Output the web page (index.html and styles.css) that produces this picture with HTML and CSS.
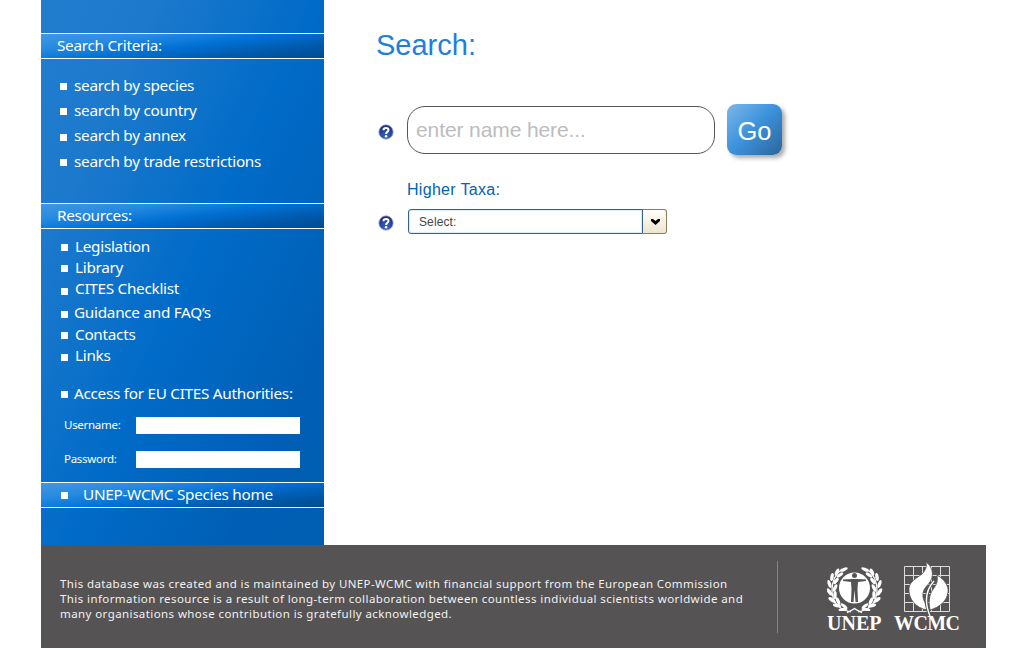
FILE: index.html
```html
<!DOCTYPE html>
<html lang="en">
<head>
<meta charset="utf-8">
<title>Species Search</title>
<link rel="stylesheet" href="styles.css">
</head>
<body>
<div class="page">
  <div class="columns">
    <aside class="sidebar">
      <h2 class="bar">Search Criteria:</h2>
      <ul class="criteria">
        <li><span>search by species</span></li>
        <li><span>search by country</span></li>
        <li class="drop"><span>search by annex</span></li>
        <li><span>search by trade restrictions</span></li>
      </ul>
      <h2 class="bar">Resources:</h2>
      <ul class="resources">
        <li class="h21"><span>Legislation</span></li>
        <li class="h21"><span>Library</span></li>
        <li class="h24"><span class="raised">CITES Checklist</span></li>
        <li class="h22 near"><span>Guidance and FAQ’s</span></li>
        <li class="h21"><span>Contacts</span></li>
        <li class="h22"><span>Links</span></li>
      </ul>
      <p class="access"><span>Access for EU CITES Authorities:</span></p>
      <form class="login">
        <label for="user">Username:</label><input id="user" type="text">
        <label for="pass">Password:</label><input id="pass" type="password">
      </form>
      <div class="bar home"><span>UNEP-WCMC Species home</span></div>
    </aside>
    <main class="main">
      <h1>Search:</h1>
      <div class="query">
        <svg class="help" viewBox="0 0 16 16"><use href="#help"/></svg>
        <input class="name" type="text" placeholder="enter name here...">
        <button class="go" type="button">Go</button>
      </div>
      <div class="taxa-label">Higher Taxa:</div>
      <div class="taxa">
        <svg class="help" viewBox="0 0 16 16"><use href="#help"/></svg>
        <div class="select"><span class="value">Select:</span><span class="arrow"><svg viewBox="0 0 9 6"><path d="M0 0h2l2.500 2L7 0h2v2L4.500 6 0 2z"/></svg></span></div>
      </div>
    </main>
  </div>
  <footer class="footer">
    <p class="credit"><span class="line-a">This database was created and is maintained by UNEP-WCMC with financial support from the European Commission</span><span>This information resource is a result of long-term collaboration between countless individual scientists worldwide and</span><span>many organisations whose contribution is gratefully acknowledged.</span></p>
    <div class="logos">
      <div class="logo unep">
        <svg viewBox="0 0 56 48">
          <g id="laurel" fill="#fff">
            <path d="M24 46Q5 42 5 24 5 11 15 3" fill="none" stroke="#fff" stroke-width="1.200"/>
            <ellipse cx="17" cy="3.500" rx="4" ry="1.600" transform="rotate(-25 17 3.500)"/>
            <ellipse cx="10" cy="6" rx="3.800" ry="1.700" transform="rotate(-65 10 6)"/>
            <ellipse cx="13" cy="9" rx="3.800" ry="1.600" transform="rotate(-35 13 9)"/>
            <ellipse cx="5" cy="11" rx="4" ry="1.700" transform="rotate(-80 5 11)"/>
            <ellipse cx="9" cy="15" rx="3.800" ry="1.700" transform="rotate(-52 9 15)"/>
            <ellipse cx="2.500" cy="18" rx="4.200" ry="1.700" transform="rotate(72 2.500 18)"/>
            <ellipse cx="8" cy="22" rx="4" ry="1.700" transform="rotate(-65 8 22)"/>
            <ellipse cx="2.500" cy="26" rx="4.200" ry="1.800" transform="rotate(57 2.500 26)"/>
            <ellipse cx="8" cy="29" rx="4" ry="1.700" transform="rotate(-88 8 29)"/>
            <ellipse cx="5" cy="34" rx="4.200" ry="1.800" transform="rotate(35 5 34)"/>
            <ellipse cx="11" cy="35" rx="4" ry="1.700" transform="rotate(65 11 35)"/>
            <ellipse cx="10" cy="39.500" rx="4.200" ry="1.700" transform="rotate(15 10 39.500)"/>
            <ellipse cx="17" cy="40" rx="4" ry="1.500" transform="rotate(38 17 40)"/>
            <ellipse cx="16" cy="43.500" rx="4.500" ry="1.400" transform="rotate(-8 16 43.500)"/>
          </g>
          <use href="#laurel" transform="matrix(-1 0 0 1 55 0)"/>
          <path d="M20 46.500Q24 45 27.500 42.500 31 45 35 46.500" fill="none" stroke="#fff" stroke-width="1.500"/>
          <circle cx="27.500" cy="22" r="15.500" fill="#fff"/>
          <g fill="#555354"><circle cx="27.500" cy="9.500" r="2.500"/><path d="M16 13.500l9-.5h5l9 .5v1.500l-8 1-.5 7 .5 13h-2.500l-1-12-1 12h-2.500l.5-13-.5-7-8-1z"/></g>
        </svg>
        <span>UNEP</span>
      </div>
      <div class="logo wcmc">
        <svg viewBox="0 0 66 55">
          <path d="M10.500 5.500h45v45h-45zM19.500 5v46M28.500 5v46M37.500 5v46M46.500 5v46M10 14.500h46M10 23.500h46M10 32.500h46M10 41.500h46" fill="none" stroke="#ddd" stroke-width="1"/>
          <path d="M32 1C38 5 40 13 37 19 35 24 30 26 29 32 28 38 32 42 33 49 22 47 14 38 15 27 16 20 23 17 28 13 32 9 33 5 32 1z" fill="#fff" stroke="#555354" stroke-width=".8"/>
          <path d="M43 14C50 18 55 25 54 31 53 40 46 46 36 49 34 38 36 32 40 27 43 23 44 19 43 14z" fill="#fff" stroke="#555354" stroke-width=".8"/>
          <path d="M40 20C30 31 31 43 36 55" fill="none" stroke="#555354" stroke-width="3.200"/><path d="M40 20C30 31 31 43 36 55" fill="none" stroke="#fff" stroke-width="1.400"/>
        </svg>
        <span>WCMC</span>
      </div>
    </div>
  </footer>
</div>
<svg class="defs"><defs>
  <radialGradient id="ball" cx=".5" cy=".8" r=".8"><stop offset="0" stop-color="#3b66c8"/><stop offset=".6" stop-color="#24429c"/><stop offset="1" stop-color="#182a70"/></radialGradient>
  <g id="help"><circle cx="8" cy="8" r="7.200" fill="url(#ball)" stroke="#a3abc8" stroke-width=".8"/><path d="M5.500 6.200Q5.500 4 8 4t2.500 2.100Q10.500 7.200 9.200 8 8.100 8.600 8.100 10" fill="none" stroke="#fff" stroke-width="2"/><circle cx="8.100" cy="12.200" r="1.200" fill="#fff"/></g>
</defs></svg>
</body>
</html>
```
FILE: styles.css
```css
* { box-sizing: border-box; }
body { margin: 0; background: #fff; font-family: "Noto Sans", sans-serif; }
h1, h2, p, ul { margin: 0; padding: 0; font-weight: 400; }
ul { list-style: none; }
.page { width: 945px; height: 648px; margin-left: 41px; }
.columns { display: flex; height: 545px; }
.sidebar { width: 283px; padding-top: 33px; color: #fff; font-size: 15.300px; letter-spacing: -.28px; background: linear-gradient(115deg, #207dce 0%, #1c79cc 22%, #006bc8 52%, #005fb5 82%, #005eb2 100%); }
.sidebar span { white-space: nowrap; }
.bar { height: 26px; padding-left: 16px; border: solid #fff; border-width: 1px 0; font-size: 15.300px; line-height: 23px; background: linear-gradient(173deg, #4297e3 0%, #278be1 25%, #0070d4 52%, #005bad 75%, #004b90 100%); }
.criteria { height: 144px; padding: 14px 0 0 19px; }
.criteria li { height: 25px; line-height: 26px; }
.criteria .drop { height: 26px; line-height: 27px; }
li, .access, .home { display: flex; align-items: center; }
li span, .access span, .home span { padding-bottom: 2px; }
li::before, .access::before, .home::before { content: ""; width: 7px; height: 7px; margin: 2px 7px 0 0; background: #fff; flex: none; }
.resources { height: 151px; padding: 7px 0 0 20px; }
.h21 { height: 21px; }
.h22 { height: 22px; }
.h24 { height: 24px; }
.resources .raised { padding-bottom: 4px; }
.resources .near::before { margin-right: 6px; }
.access { height: 28px; padding-left: 20px; }
.access::before { margin: 0 6px 0 0; }
.login { display: grid; grid-template-columns: 72px 164px; row-gap: 17px; height: 74px; padding: 9px 0 0 23px; align-content: start; font-size: 11.500px; }
.login label { height: 17px; line-height: 16px; }
.login input { width: 164px; height: 17px; padding: 0 4px; border: 0; background: #fff; }
.home { padding-left: 20px; line-height: 24px; }
.home::before { margin: 0 15px 0 0; }
.main { padding-left: 54px; font-family: "Liberation Sans", Arial, sans-serif; }
h1 { height: 104px; padding-top: 28px; margin-left: -2px; color: #1c80dc; font-size: 29px; line-height: 34px; }
.query { display: flex; height: 51px; }
.help { width: 16px; height: 16px; flex: none; }
.query .help { margin-top: 20px; }
.name { width: 308px; height: 48px; margin: 2px 12px 0 13px; padding: 0 8px; border: 1px solid #555; border-radius: 18px; background: #fff; font: 21px "Liberation Sans", Arial, sans-serif; letter-spacing: -.1px; }
.name::placeholder { color: #bdbdbd; opacity: 1; }
.go { width: 55px; height: 51px; padding: 3px 0 0; border: 0; border-radius: 9px; color: #fff; font: 25.500px "Liberation Sans", Arial, sans-serif; background: linear-gradient(135deg, #7db8e9 0%, #3c92dc 48%, #2c659b 100%); box-shadow: 3px 3px 4px #aaa; }
.taxa-label { height: 54px; padding: 25px 0 0 29px; color: #0063b2; font-size: 16px; line-height: 20px; letter-spacing: .3px; }
.taxa { display: flex; }
.taxa .help { margin: 6px 14px 0 0; }
.select { display: flex; width: 259px; height: 25px; }
.value { width: 235px; padding-left: 10px; border: 1px solid #355f94; border-radius: 3px 0 0 3px; box-shadow: inset 0 0 1px 1px #d5edfb; color: #444; font-size: 12px; line-height: 24px; letter-spacing: .1px; }
.arrow { display: grid; place-items: center; width: 24px; padding-left: 1px; border: 1px solid #8c7b5c; border-left: 0; border-radius: 0 3px 3px 0; background: linear-gradient(#fffef8, #efe5cf); }
.arrow svg { width: 9px; height: 6px; }
.footer { display: flex; width: 945px; height: 103px; background: #555354; color: #f2f2f2; }
.credit { display: flex; flex-direction: column; width: 718px; height: 72px; margin: 16px 0 0 19px; padding-top: 15px; border-right: 1px solid #858384; font-size: 11.500px; line-height: 15px; letter-spacing: .415px; }
.credit span { white-space: nowrap; }
.credit .line-a { letter-spacing: .39px; }
.logos { display: flex; padding: 16px 0 0 49px; color: #fff; font: bold 20px/18px "Liberation Serif", "Times New Roman", serif; }
.logo { display: flex; flex-direction: column; }
.logo svg { display: block; }
.unep { width: 67px; padding-top: 5px; }
.unep svg { width: 56px; height: 48px; }
.wcmc { width: 67px; letter-spacing: -.6px; }
.wcmc svg { width: 66px; height: 55px; margin-bottom: -2px; }
.defs { position: absolute; width: 0; height: 0; }
```
